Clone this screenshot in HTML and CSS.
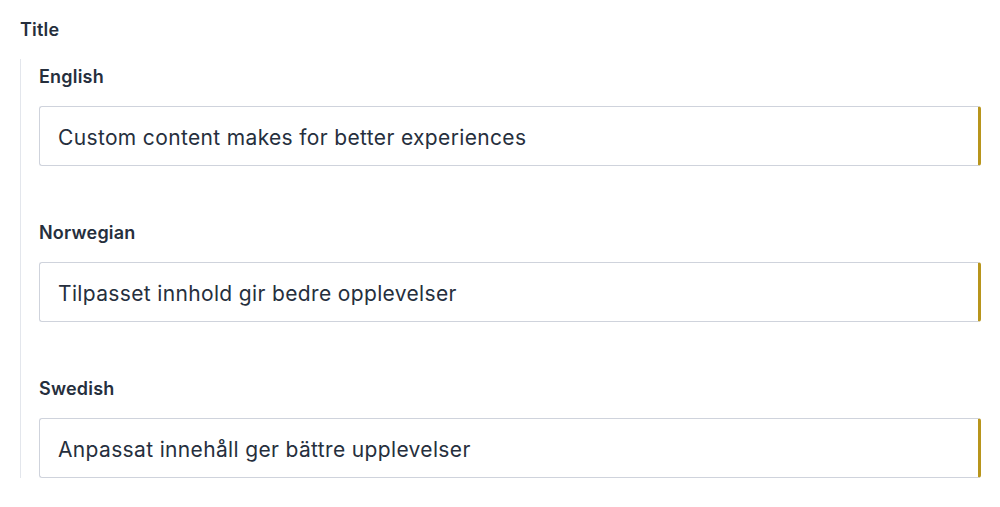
FILE: index.html
```html
<!DOCTYPE html>
<html>
<head>
<meta charset="utf-8">
<link rel="stylesheet" href="styles.css">
</head>
<body>
<div class="page">
  <div class="title">Title</div>
  <div class="fields">
    <div class="field">
      <div class="label">English</div>
      <div class="input">Custom content makes for better experiences</div>
    </div>
    <div class="field">
      <div class="label">Norwegian</div>
      <div class="input">Tilpasset innhold gir bedre opplevelser</div>
    </div>
    <div class="field">
      <div class="label">Swedish</div>
      <div class="input">Anpassat innehåll ger bättre upplevelser</div>
    </div>
  </div>
</div>
</body>
</html>
```
FILE: styles.css
```css
html, body { margin: 0; background: #fff; }
body { font-family: Inter, "Noto Sans", sans-serif; color: #262f3d; }
.page { padding: 20px 19px 0 20px; }
.title { font-size: 18px; line-height: 20px; font-weight: 600; letter-spacing: 0.2px; margin-bottom: 19px; }
.fields { border-left: 1px solid #e3e6ec; padding: 8px 0 0 18px; display: flex; flex-direction: column; gap: 57px; }
.label { font-size: 18px; line-height: 20px; font-weight: 600; letter-spacing: 0.2px; margin-bottom: 19px; }
.input {
  box-sizing: border-box; height: 60px; display: flex; align-items: center;
  padding: 2px 0 0 18px; font-size: 21px; letter-spacing: 0.35px; color: #262f3d;
  border: 1px solid #cfd3dc; border-right: 3px solid #b8951c; border-radius: 3px;
}
```
